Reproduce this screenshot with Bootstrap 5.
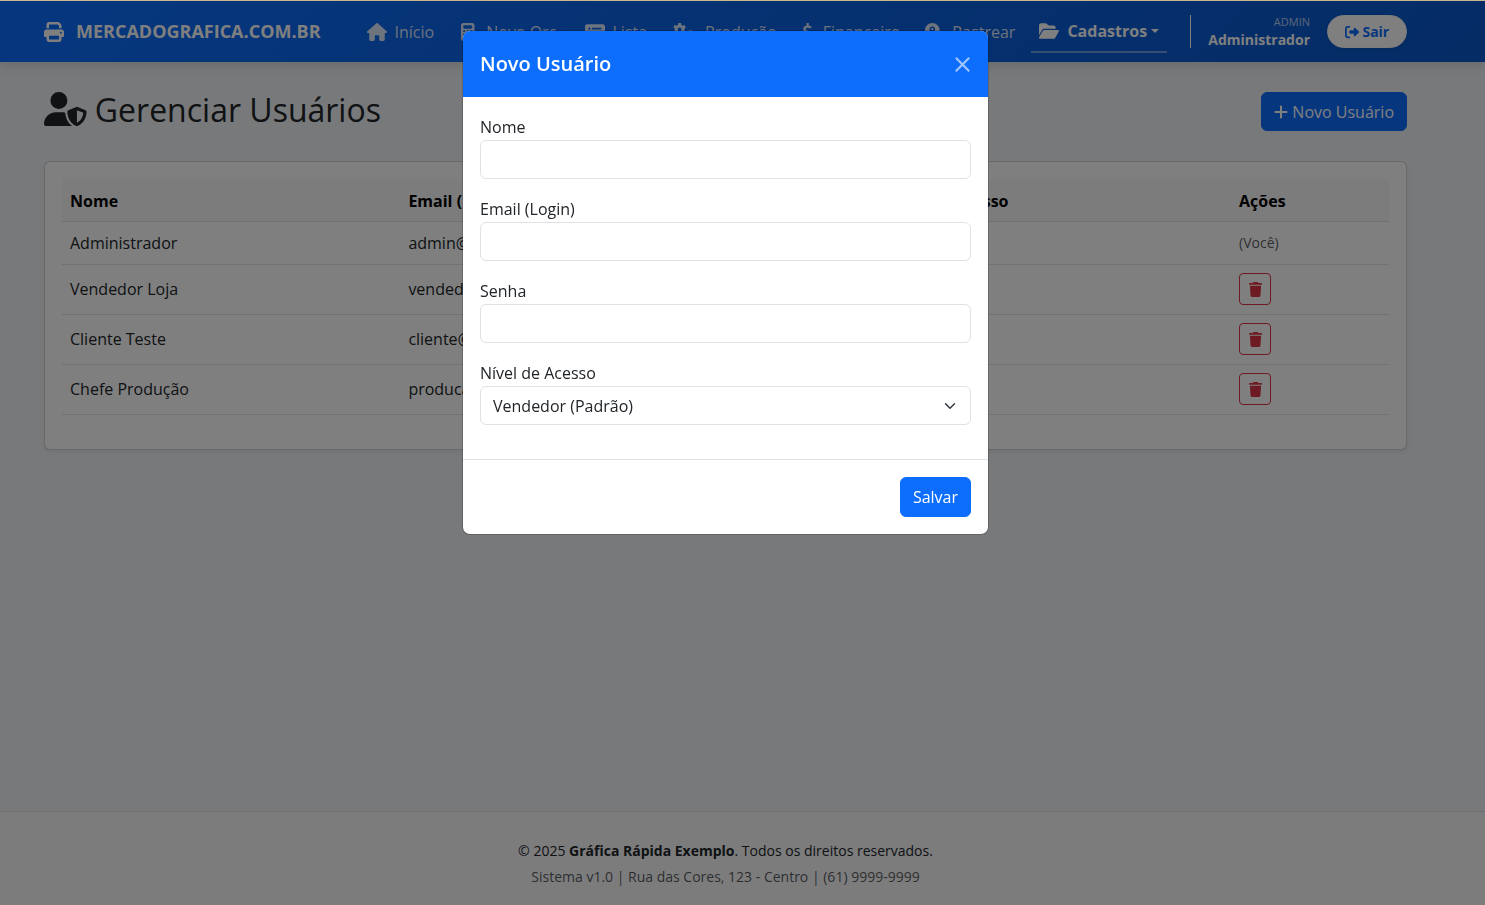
<!DOCTYPE html>
<html lang="pt-BR">
<head>
<meta charset="utf-8">
<meta name="viewport" content="width=device-width, initial-scale=1">
<title>Gerenciar Usuários</title>
<link href="https://cdn.jsdelivr.net/npm/bootstrap@5.3.0/dist/css/bootstrap.min.css" rel="stylesheet">
<style>
  :root { --gutter-end: 34px; }
  body { font-family: "Open Sans", "Noto Sans", sans-serif; font-size: 16px; background: #f0f2f5; border-top: 1px solid #c8b68e; }
  .fa { height: 1em; width: auto; fill: currentColor; vertical-align: -2px; }
  .page-pad { padding-right: var(--gutter-end); }
  .page-pad > .container { max-width: 1387px; }
  .topbar { background: linear-gradient(135deg, #0d6efd, #0a58ca); box-shadow: 0 4px 10px rgba(0, 0, 0, .12); height: 61px; }
  .brand { font-size: 18px; font-weight: 700; color: #fff; margin-right: 38px; }
  .brand .fa { font-size: 20px; margin-right: 12px; }
  .menu .nav-link { color: rgba(255, 255, 255, .85); padding: 8px; font-size: 16px; line-height: 24px; display: flex; align-items: center; white-space: nowrap; }
  .menu { gap: 8px; }
  .menu .ico { width: 20px; margin-right: 8px; display: flex; justify-content: center; font-size: 18px; }
  .menu .ico-wide { width: 26px; }
  .menu .ico-slim { width: 14px; }
  .menu .nav-link.active { color: #fff; font-weight: 700; border-bottom: 2px solid rgba(255, 255, 255, .4); }
  .who { border-left: 1px solid #fff; height: 33px; padding-left: 17px; margin-right: 17px; }
  .who .role { font-size: 11px; line-height: 14px; color: rgba(255, 255, 255, .7); }
  .who .person { font-size: 14px; line-height: 21px; font-weight: 700; color: #fff; }
  .logout { height: 33px; width: 80px; padding: 0; font-size: 14px; font-weight: 700; color: #0d6efd; }
  .content { padding-top: 30px; }
  .heading { margin-bottom: 30px; }
  .title { font-size: 32px; line-height: 32px; font-weight: 500; }
  .title .fa { vertical-align: -4px; font-size: 34px; }
  .ctl { min-height: 39px; }
  .panel { border-radius: 6px; padding: 17px; }
  .users { margin-bottom: 17px; }
  .users td, .users th { height: 43px; padding: 8px; line-height: 24px; }
  .users th { height: 42px; }
  .users .btn { width: 32px; height: 32px; padding: 0; font-size: 15px; }
  .users .btn .fa { width: 13px; }
  .users tr.tall td { height: 50px; }
  .you { font-size: 14px; }
  .foot { border-top: 1px solid #dee2e6; background: #f8f9fa; padding-top: 26px; padding-bottom: 15px; font-size: 14px; line-height: 26px; }
  .modal-backdrop { top: 1px; }
  .modal { padding-right: var(--gutter-end); }
  .modal-dialog { max-width: 527px; margin-top: 30px; }
  .modal-content { border-radius: 8px; overflow: hidden; }
  .modal-header { height: 66px; padding: 17px; border: 0; border-radius: 0; }
  .modal-title { font-size: 20px; font-weight: 600; }
  .modal-header .btn-close { width: 17px; height: 17px; padding: 0; margin: 0; background-size: 17px; opacity: .6; }
  .modal-body { padding: 17px; }
  .modal-body .field { margin-bottom: 17px; }
  .modal-body label { display: block; line-height: 26px; }
  .modal-body .form-control, .modal-body .form-select { height: 39px; }
  .modal-footer { padding: 17px; }
  .modal-footer > * { margin: 0; }
  .modal-footer .ctl { min-height: 40px; }
</style>
</head>
<body class="d-flex flex-column min-vh-100">
<nav class="topbar page-pad d-flex align-items-center">
  <div class="container d-flex align-items-center">
    <a class="brand d-flex align-items-center text-decoration-none text-nowrap" href="#"><svg class="fa" viewBox="0 0 512 512"><path d="M128 0C92.7 0 64 28.7 64 64v96h64V64H354.7L384 93.3V160h64V93.3c0-17-6.7-33.3-18.7-45.3L400 18.7C388 6.7 371.7 0 354.7 0H128zM384 352v96H128V352H384zm64 32h32c17.7 0 32-14.3 32-32V256c0-35.3-28.7-64-64-64H64c-35.3 0-64 28.7-64 64v96c0 17.7 14.3 32 32 32H64v64c0 35.3 28.7 64 64 64H384c35.3 0 64-28.7 64-64V384zM432 248a24 24 0 1 1 0 48 24 24 0 1 1 0-48z"/></svg>MERCADOGRAFICA.COM.BR</a>
    <div class="menu d-flex">
      <a class="nav-link" href="#"><span class="ico"><svg class="fa" viewBox="0 0 576 512"><path d="M575.8 255.5c0 18-15 32.1-32 32.1h-32l.7 160.2c0 2.7-.2 5.4-.5 8.1V472c0 22.1-17.9 40-40 40H392c-22.1 0-40-17.9-40-40V384c0-17.7-14.3-32-32-32H256c-17.7 0-32 14.3-32 32v88c0 22.1-17.9 40-40 40H104c-22.1 0-40-17.9-40-40V287.6H32c-18 0-32-14-32-32.1c0-9 3-17 10-24L266.4 8c7-7 15-8 22-8s15 2 21 7L564.8 231.5c8 7 12 15 11 24z"/></svg></span>Início</a>
      <a class="nav-link" href="#"><span class="ico"><svg class="fa" viewBox="0 0 384 512"><path fill-rule="evenodd" d="M64 0C28.7 0 0 28.7 0 64V448c0 35.3 28.7 64 64 64H320c35.3 0 64-28.7 64-64V64c0-35.3-28.7-64-64-64H64zM96 64H288c17.7 0 32 14.3 32 32v32c0 17.7-14.3 32-32 32H96c-17.7 0-32-14.3-32-32V96c0-17.7 14.3-32 32-32zM64 208h48v48H64zM168 208h48v48H168zM272 208h48v48H272zM64 304h48v48H64zM168 304h48v48H168zM272 304h48v48H272zM64 400h152v48H64zM272 400h48v48H272z"/></svg></span>Novo Orç.</a>
      <a class="nav-link" href="#"><span class="ico"><svg class="fa" viewBox="0 0 576 512"><path fill-rule="evenodd" d="M0 96C0 60.7 28.7 32 64 32H512c35.3 0 64 28.7 64 64V416c0 35.3-28.7 64-64 64H64c-35.3 0-64-28.7-64-64V96zM128 288a32 32 0 1 0 0-64 32 32 0 1 0 0 64zm32-128a32 32 0 1 0-64 0 32 32 0 1 0 64 0zM128 384a32 32 0 1 0 0-64 32 32 0 1 0 0 64zM200 136h272v48H200zM200 232h272v48H200zM200 328h272v48H200z"/></svg></span>Lista</a>
      <a class="nav-link" href="#"><span class="ico ico-wide"><svg class="fa" viewBox="0 0 640 512"><path fill-rule="evenodd" d="M150 0h76l12 56 34 20 55-18 38 66-43 38v40l43 38-38 66-55-18-34 20-12 56h-76l-12-56-34-20-55 18-38-66 43-38v-40l-43-38 38-66 55 18 34-20zM188 126a56 56 0 1 0 0 112 56 56 0 1 0 0-112zM470 200l26 20 26-20 44 24-4 36 20 24 36 6v50l-36 8-18 28 8 36-46 24-28-22-28 22-46-24 8-36-18-28-36-8v-50l36-6 20-24-4-36zM496 280a38 38 0 1 0 0 76 38 38 0 1 0 0-76z"/></svg></span>Produção</a>
      <a class="nav-link" href="#"><span class="ico ico-slim"><svg class="fa" viewBox="0 0 320 512"><path d="M160 0v90M160 422v90M262 130c-30-18-65-30-102-30-58 0-92 28-92 70 0 98 184 62 184 160 0 52-38 82-92 82-42 0-80-14-112-36" fill="none" stroke="currentColor" stroke-width="64"/></svg></span>Financeiro</a>
      <a class="nav-link" href="#"><span class="ico"><svg class="fa" viewBox="0 0 512 512"><path fill-rule="evenodd" d="M416 208c0 45.900-14.900 88.300-40 122.700L502.600 457.400c12.500 12.500 12.500 32.800 0 45.300s-32.800 12.500-45.300 0L330.700 376c-34.400 25.200-76.800 40-122.700 40C93.100 416 0 322.900 0 208S93.100 0 208 0S416 93.100 416 208zM288 176c0-44.200-35.800-80-80-80s-80 35.800-80 80c0 48.800 46.500 111.600 68.600 138.600c6 7.300 16.800 7.300 22.700 0c22.100-27 68.600-89.800 68.600-138.600zM208 208a32 32 0 1 1 0-64 32 32 0 1 1 0 64z"/></svg></span>Rastrear</a>
      <a class="nav-link active dropdown-toggle" href="#"><span class="ico"><svg class="fa" viewBox="0 0 576 512"><path d="M88.7 223.800L0 375.800V96C0 60.700 28.700 32 64 32H181.500c17 0 33.300 6.700 45.300 18.700l26.500 26.500c12 12 28.300 18.700 45.300 18.700H416c35.300 0 64 28.700 64 64v32H144c-22.800 0-43.800 12.100-55.300 31.800zm27.600 16.100C122.100 230 132.600 224 144 224H544c11.500 0 22 6.100 27.700 16.100s5.700 22.200-.1 32.100l-112 192C453.900 474 443.400 480 432 480H32c-11.500 0-22-6.100-27.700-16.100s-5.700-22.200 .1-32.100l112-192z"/></svg></span>Cadastros</a>
    </div>
    <div class="ms-auto d-flex align-items-center">
      <div class="who text-end"><div class="role">ADMIN</div><div class="person">Administrador</div></div>
      <button class="btn btn-light bg-white rounded-pill logout shadow-sm" type="button"><svg class="fa" viewBox="0 0 512 512"><path d="M377.9 105.900L500.700 228.700c7.200 7.200 11.300 17.100 11.300 27.300s-4.100 20.100-11.300 27.300L377.900 406.100c-6.400 6.400-15 9.900-24 9.900c-18.700 0-33.900-15.200-33.900-33.900l0-62.100-128 0c-17.700 0-32-14.300-32-32l0-64c0-17.700 14.300-32 32-32l128 0 0-62.100c0-18.700 15.200-33.900 33.900-33.900c9 0 17.600 3.600 24 9.900zM160 96L96 96c-17.700 0-32 14.300-32 32l0 256c0 17.700 14.300 32 32 32l64 0c17.700 0 32 14.300 32 32s-14.300 32-32 32l-64 0c-53 0-96-43-96-96L0 128C0 75 43 32 96 32l64 0c17.700 0 32 14.300 32 32s-14.300 32-32 32z"/></svg> Sair</button>
    </div>
  </div>
</nav>

<main class="content page-pad flex-grow-1">
  <div class="container">
    <div class="d-flex justify-content-between align-items-start heading">
      <h1 class="title mb-0"><svg class="fa" viewBox="0 0 640 512"><path d="M224 256A128 128 0 1 0 224 0a128 128 0 1 0 0 256zm-45.700 48C79.800 304 0 383.800 0 482.300C0 498.700 13.300 512 29.700 512H418.300c1.800 0 3.500-.2 5.300-.5c-76.300-55.100-99.800-141-103.100-200.200c-16.100-4.800-33.100-7.300-50.700-7.300H178.300zm308.800-78.300l-120 48C358 277.400 352 286.200 352 296c0 63.300 25.900 168.800 134.800 214.200c5.900 2.500 12.600 2.500 18.500 0C614.100 464.800 640 359.300 640 296c0-9.800-6-18.600-15.100-22.300l-120-48c-5.700-2.300-12.100-2.300-17.800 0zM591.400 312c-3.900 50.700-27.200 116.700-95.400 149.700V273.800L591.400 312z"/></svg> Gerenciar Usuários</h1>
      <button class="btn btn-primary ctl text-nowrap" type="button"><svg class="fa" viewBox="0 0 448 512"><path d="M256 80c0-17.700-14.300-32-32-32s-32 14.300-32 32V224H48c-17.700 0-32 14.300-32 32s14.300 32 32 32H192V432c0 17.700 14.300 32 32 32s32-14.300 32-32V288H400c17.700 0 32-14.300 32-32s-14.300-32-32-32H256V80z"/></svg> Novo Usuário</button>
    </div>
    <div class="card panel shadow-sm">
      <table class="table users align-middle">
        <colgroup><col style="width:25.5%"><col style="width:35.9%"><col style="width:26.7%"><col style="width:11.9%"></colgroup>
        <thead class="table-light"><tr><th>Nome</th><th>Email (Login)</th><th>Nível de Acesso</th><th>Ações</th></tr></thead>
        <tbody>
          <tr><td>Administrador</td><td>admin@grafica.com</td><td>Admin</td><td><span class="you text-muted">(Você)</span></td></tr>
          <tr class="tall"><td>Vendedor Loja</td><td>vendedor@grafica.com</td><td>Vendedor</td><td><button class="btn btn-outline-danger btn-sm" type="button" aria-label="Excluir"><svg class="fa" viewBox="0 0 448 512"><use href="#trash"/></svg></button></td></tr>
          <tr class="tall"><td>Cliente Teste</td><td>cliente@grafica.com</td><td>Cliente</td><td><button class="btn btn-outline-danger btn-sm" type="button" aria-label="Excluir"><svg class="fa" viewBox="0 0 448 512"><use href="#trash"/></svg></button></td></tr>
          <tr class="tall"><td>Chefe Produção</td><td>producao@grafica.com</td><td>Produção</td><td><button class="btn btn-outline-danger btn-sm" type="button" aria-label="Excluir"><svg class="fa" viewBox="0 0 448 512"><use href="#trash"/></svg></button></td></tr>
        </tbody>
      </table>
    </div>
  </div>
</main>

<footer class="foot page-pad text-center">
  <div>© 2025 <strong>Gráfica Rápida Exemplo</strong>. Todos os direitos reservados.</div>
  <div class="text-muted">Sistema v1.0 | Rua das Cores, 123 - Centro | (61) 9999-9999</div>
</footer>

<svg class="d-none"><symbol id="trash" viewBox="0 0 448 512"><path d="M135.200 17.700L128 32H32C14.300 32 0 46.300 0 64S14.300 96 32 96H416c17.700 0 32-14.300 32-32s-14.300-32-32-32H320l-7.200-14.300C307.400 6.800 296.300 0 284.200 0H163.800c-12.100 0-23.200 6.800-28.600 17.700zM416 128H32L53.200 467c1.600 25.300 22.600 45 47.900 45H346.900c25.300 0 46.300-19.700 47.900-45L416 128z"/></symbol></svg>

<div class="modal-backdrop show"></div>
<div class="modal show d-block" tabindex="-1" role="dialog" aria-labelledby="newUserTitle">
  <div class="modal-dialog">
    <form class="modal-content">
      <div class="modal-header bg-primary text-white">
        <h2 class="modal-title" id="newUserTitle">Novo Usuário</h2>
        <button type="button" class="btn-close btn-close-white ms-auto" aria-label="Fechar"></button>
      </div>
      <div class="modal-body">
        <div class="field"><label for="nome">Nome</label><input class="form-control" id="nome" type="text"></div>
        <div class="field"><label for="email">Email (Login)</label><input class="form-control" id="email" type="email"></div>
        <div class="field"><label for="senha">Senha</label><input class="form-control" id="senha" type="password"></div>
        <div class="field"><label for="nivel">Nível de Acesso</label><select class="form-select" id="nivel"><option>Vendedor (Padrão)</option></select></div>
      </div>
      <div class="modal-footer"><button type="submit" class="btn btn-primary ctl">Salvar</button></div>
    </form>
  </div>
</div>
<script src="https://cdn.jsdelivr.net/npm/bootstrap@5.3.0/dist/js/bootstrap.bundle.min.js"></script>
</body>
</html>
